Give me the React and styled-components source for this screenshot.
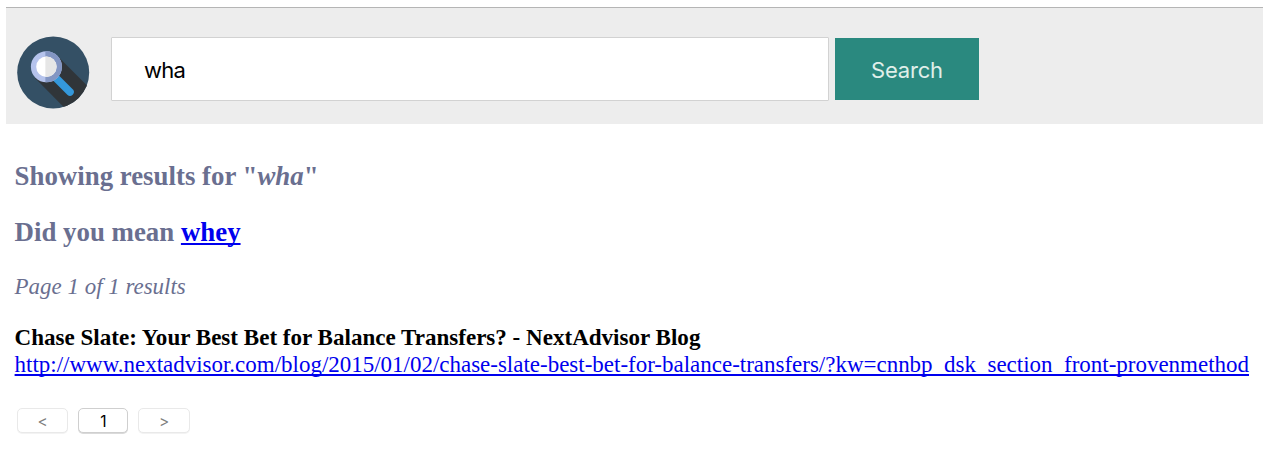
import React from 'react';
import styled, { createGlobalStyle } from 'styled-components';

const GlobalStyle = createGlobalStyle`
  * { box-sizing: border-box; }
  body { margin: 0; background: #fff; }
`;

const Page = styled.div`
  padding: 7px 11px 0 6px;
  height: 460px;
  overflow: hidden;
  font-family: "Liberation Serif", "Times New Roman", serif;
`;

const SearchBar = styled.form`
  display: flex;
  align-items: flex-start;
  height: 117px;
  margin: 0;
  padding: 29px 0 0 11px;
  background: #ededed;
  border-top: 1px solid #b5b5b5;
`;

const Logo = styled.svg`
  display: block;
  width: 72px;
  height: 72px;
  margin-right: 22px;
  overflow: visible;
`;

const SearchInput = styled.input`
  width: 718px;
  height: 64px;
  margin: 0 6px 0 0;
  padding: 1px 33px 0 32px;
  border: 1px solid #d2d2d2;
  border-radius: 1px;
  background: #fff;
  color: #000;
  font: 22px Inter, sans-serif;
  letter-spacing: -0.7px;
  outline: none;
`;

const SearchButton = styled.button`
  width: 144px;
  height: 62px;
  margin-top: 1px;
  padding: 1px 0 0;
  border: 0;
  background: #2a897f;
  color: #e0efea;
  font: 22px Inter, sans-serif;
  letter-spacing: -0.2px;
`;

const Results = styled.main`
  padding: 36px 0 0 8.6px;
`;

const Heading = styled.h2`
  margin: 0 0 24px;
  color: #6a6f90;
  font-size: 26.85px;
  line-height: 32px;
  white-space: nowrap;
`;

const PageInfo = styled.p`
  margin: 26px 0 23px;
  color: #6a6f90;
  font-size: 22.95px;
  line-height: 26px;
  font-style: italic;
`;

const Result = styled.article`
  font-size: 22.98px;
  line-height: 28px;
  white-space: nowrap;
`;

const ResultTitle = styled.div`
  font-size: 23.05px;
  font-weight: bold;
`;

const Link = styled.a`
  color: #0000ee;
  text-decoration: underline;
  text-decoration-skip-ink: none;
`;

const Pager = styled.nav`
  display: flex;
  gap: 10px;
  margin: 29px 0 0 2.4px;
`;

const PagerButton = styled.button`
  width: ${(p) => (p.$current ? 50 : 51.5)}px;
  height: 25px;
  padding: 1px 0 0;
  border: 1px solid ${(p) => (p.$current ? '#cfcfcf' : '#e9e9e9')};
  border-radius: 5px;
  background: #fff;
  box-shadow: 0 1px 0 ${(p) => (p.$current ? '#dadada' : '#f3f3f3')};
  color: ${(p) => (p.$current ? '#000' : '#7f7f7f')};
  font: 15.5px Inter, sans-serif;
`;

function MagnifierLogo() {
  return (
    <Logo viewBox="0 0.5 72 72" aria-label="Search logo">
      <defs>
        <clipPath id="disc"><circle cx="36.2" cy="36" r="36" /></clipPath>
      </defs>
      <circle cx="36.2" cy="36" r="36" fill="#345065" />
      <path clipPath="url(#disc)" d="M40.5 19.5 L80 59 L60 84 L18 41.5 Z" fill="#303539" />
      <path d="M39 41.5 L53 55.5" stroke="#3498db" strokeWidth="7.6" strokeLinecap="round" />
      <circle cx="29.4" cy="30.3" r="15.5" fill="#b5c3ec" />
      <path d="M28.4 14.8 H29.4 A15.5 15.5 0 0 1 29.4 45.8 H28.4 Z" fill="#8396c3" />
      <circle cx="29.4" cy="30.3" r="10.2" fill="#fff" />
      <path d="M28.4 20.1 H29.4 A10.2 10.2 0 0 1 29.4 40.5 H28.4 Z" fill="#e6e6e6" />
    </Logo>
  );
}

export default function App() {
  return (
    <>
      <GlobalStyle />
      <Page>
        <SearchBar onSubmit={(e) => e.preventDefault()}>
          <MagnifierLogo />
          <SearchInput defaultValue="wha" aria-label="Query" />
          <SearchButton>Search</SearchButton>
        </SearchBar>
        <Results>
          <Heading>Showing results for "<em>wha</em>"</Heading>
          <Heading>Did you mean <Link href="#whey">whey</Link></Heading>
          <PageInfo>Page 1 of 1 results</PageInfo>
          <Result>
            <ResultTitle>Chase Slate: Your Best Bet for Balance Transfers? - NextAdvisor Blog</ResultTitle>
            <Link href="#result">http://www.nextadvisor.com/blog/2015/01/02/chase-slate-best-bet-for-balance-transfers/?kw=cnnbp_dsk_section_front-provenmethod</Link>
          </Result>
          <Pager>
            <PagerButton>&lt;</PagerButton>
            <PagerButton $current>1</PagerButton>
            <PagerButton>&gt;</PagerButton>
          </Pager>
        </Results>
      </Page>
    </>
  );
}
